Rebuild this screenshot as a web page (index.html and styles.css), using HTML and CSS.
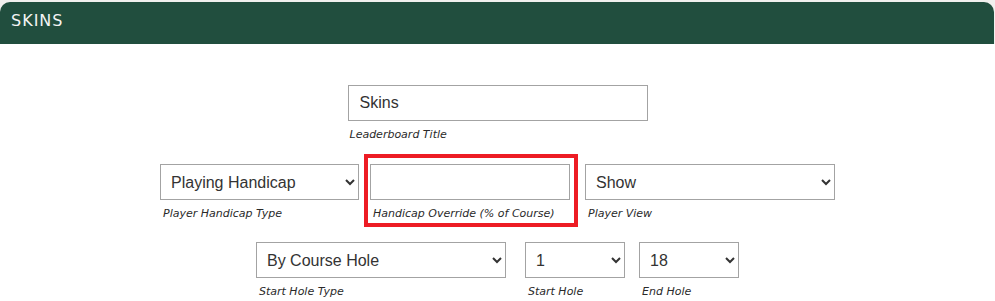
FILE: index.html
```html
<!DOCTYPE html>
<html lang="en">
<head>
    <meta charset="UTF-8">
    <meta name="viewport" content="width=device-width, initial-scale=1.0">
    <title>Skins</title>
    <link rel="stylesheet" href="styles.css">
</head>
<body>
    <div class="panel">
        <div class="panel-header">SKINS</div>

        <div class="panel-body">
            <div class="row">
                <div class="field field-title">
                    <input type="text" id="title" value="Skins">
                    <label for="title">Leaderboard Title</label>
                </div>
            </div>

            <div class="row row-handicap">
                <div class="field field-handicap-type">
                    <select id="handicapType">
                        <option>Playing Handicap</option>
                        <option>Course Handicap</option>
                    </select>
                    <label for="handicapType">Player Handicap Type</label>
                </div>
                <div class="field field-override highlight">
                    <input type="text" id="override">
                    <label for="override">Handicap Override (% of Course)</label>
                </div>
                <div class="field field-view">
                    <select id="playerView">
                        <option>Show</option>
                        <option>Hide</option>
                    </select>
                    <label for="playerView">Player View</label>
                </div>
            </div>

            <div class="row">
                <div class="field field-hole-type">
                    <select id="startHoleType">
                        <option>By Course Hole</option>
                        <option>Shotgun</option>
                    </select>
                    <label for="startHoleType">Start Hole Type</label>
                </div>
                <div class="field field-start">
                    <select id="startHole">
                        <option>1</option>
                        <option>10</option>
                    </select>
                    <label for="startHole">Start Hole</label>
                </div>
                <div class="field field-end">
                    <select id="endHole">
                        <option>18</option>
                        <option>9</option>
                    </select>
                    <label for="endHole">End Hole</label>
                </div>
            </div>
        </div>
    </div>
</body>
</html>
```

FILE: styles.css
```css
body {
    margin: 0;
    background-color: #fff;
    font-family: 'Liberation Sans', Arial, sans-serif;
    color: #333;
}

.panel {
    background-color: #f1f0ee;
    padding-top: 2px;
}

.panel-header {
    width: 983px;
    height: 42px;
    line-height: 38px;
    padding-left: 11px;
    background-color: #214e3e;
    border-radius: 10px 10px 0 0;
    color: #f4f4f4;
    font-family: 'DejaVu Sans', Verdana, sans-serif;
    font-size: 16px;
    letter-spacing: 1px;
}

.panel-body {
    background-color: #fff;
    padding-top: 41px;
    padding-bottom: 20px;
}

.row {
    display: flex;
    justify-content: center;
    margin-bottom: 22px;
}

.row-handicap {
    margin-bottom: 21px;
}

.field {
    display: flex;
    flex-direction: column;
    position: relative;
}

.field input,
.field select {
    box-sizing: border-box;
    height: 36px;
    border: 1px solid #a3a3a3;
    border-radius: 0;
    background-color: #fff;
    font-family: 'Liberation Sans', Arial, sans-serif;
    font-size: 16px;
    color: #333;
    margin: 0;
}

.field input {
    padding: 0 11px;
}

.field select {
    padding: 0 6px;
}

.field label {
    margin-top: 6px;
    padding-left: 3px;
    height: 15px;
    line-height: 15px;
    font-family: 'DejaVu Sans', Verdana, sans-serif;
    font-style: italic;
    font-size: 11px;
    color: #2a2a2a;
}

.field-title { width: 300px; }
.field-title label { padding-left: 2px; }

.field-handicap-type { width: 199px; }
.field-override { width: 200px; margin: 0 15px 0 11px; }
.field-view { width: 250px; }

.field-hole-type { width: 250px; margin-right: 19px; }
.field-start { width: 100px; margin-right: 14px; }
.field-end { width: 100px; }

/* red annotation box drawn around the override field */
.highlight::after {
    content: "";
    position: absolute;
    top: -10px;
    left: -6px;
    right: -8px;
    bottom: -6px;
    border: 4px solid #ed1c24;
    pointer-events: none;
}
```
